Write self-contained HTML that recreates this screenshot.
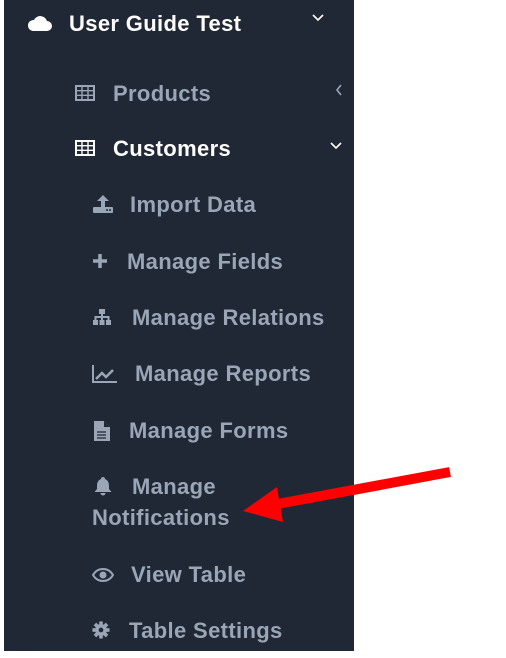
<!DOCTYPE html>
<html><head><meta charset="utf-8"><style>
*{margin:0;padding:0}
body{width:506px;height:658px;background:#fff;position:relative;overflow:hidden;font-family:"Liberation Sans",Arial,sans-serif;font-weight:bold}
#sb{position:absolute;left:4px;top:0;width:350px;height:651px;background:#1f2834}
.t{position:absolute;font-size:22px;letter-spacing:0.35px;color:#9aa5b6;white-space:nowrap;line-height:24px}
.w{color:#fff}
svg.i{position:absolute}
</style></head><body>
<div id="sb"></div>
<svg class="i" style="left:27px;top:14px" width="26" height="18" viewBox="0 0 26 18"><path d="M6 17h14a5 5 0 0 0 0-10 7 7 0 0 0-13-1A5.5 5.5 0 0 0 6 17z" fill="#fff"/></svg>
<div class="t w" style="left:69px;top:12px">User Guide Test</div>
<svg class="i" style="left:311px;top:13px" width="14" height="10"><path d="M2 2l5 5 5-5" stroke="#fff" stroke-width="1.6" fill="none"/></svg>
<svg class="i" style="left:75px;top:85px" width="20" height="16"><rect x="1" y="1" width="18" height="14" fill="none" stroke="#9aa5b6" stroke-width="2"/><path d="M1 5.7h18M1 10.3h18M7 1v14M13 1v14" stroke="#9aa5b6" stroke-width="1.4"/></svg>
<div class="t" style="left:113px;top:82px">Products</div>
<svg class="i" style="left:334px;top:83px" width="10" height="14"><path d="M7 2L3 7l4 5" stroke="#9aa5b6" stroke-width="1.6" fill="none"/></svg>
<svg class="i" style="left:75px;top:140px" width="20" height="16"><rect x="1" y="1" width="18" height="14" fill="none" stroke="#fff" stroke-width="2"/><path d="M1 5.7h18M1 10.3h18M7 1v14M13 1v14" stroke="#fff" stroke-width="1.4"/></svg>
<div class="t w" style="left:113px;top:137px">Customers</div>
<svg class="i" style="left:329px;top:141px" width="14" height="10"><path d="M2 2l5 5 5-5" stroke="#fff" stroke-width="1.6" fill="none"/></svg>
<svg class="i" style="left:92px;top:194px" width="22" height="20"><path d="M11 1l6 6h-4v6h-4V7H5z" fill="#9aa5b6"/><rect x="1" y="13" width="20" height="6" rx="1" fill="#9aa5b6"/><circle cx="15" cy="16" r="1" fill="#1f2834"/><circle cx="18" cy="16" r="1" fill="#1f2834"/></svg>
<div class="t" style="left:130px;top:193px">Import Data</div>
<svg class="i" style="left:92px;top:253px" width="16" height="16"><path d="M8 1v14M1 8h14" stroke="#9aa5b6" stroke-width="3.5"/></svg>
<div class="t" style="left:127px;top:250px">Manage Fields</div>
<svg class="i" style="left:92px;top:308px" width="20" height="18"><rect x="7" y="1" width="6" height="5" fill="#9aa5b6"/><path d="M10 6v3M3.5 12V9h13v3M10 9v3" stroke="#9aa5b6" stroke-width="2" fill="none"/><rect x="1" y="12" width="5" height="5" fill="#9aa5b6"/><rect x="7.5" y="12" width="5" height="5" fill="#9aa5b6"/><rect x="14" y="12" width="5" height="5" fill="#9aa5b6"/></svg>
<div class="t" style="left:132px;top:306px">Manage Relations</div>
<svg class="i" style="left:92px;top:364px" width="26" height="20"><path d="M1 1v17h24" stroke="#9aa5b6" stroke-width="2" fill="none"/><path d="M4 15l6-6 4 4 7-7" stroke="#9aa5b6" stroke-width="2.5" fill="none"/></svg>
<div class="t" style="left:135px;top:362px">Manage Reports</div>
<svg class="i" style="left:93px;top:420px" width="18" height="22"><path d="M1 1h10l6 6v14H1z" fill="#9aa5b6"/><path d="M11 1v6h6" fill="#1f2834"/><path d="M4 12h9M4 15h9M4 18h9" stroke="#1f2834" stroke-width="1.3"/></svg>
<div class="t" style="left:129px;top:419px">Manage Forms</div>
<svg class="i" style="left:93px;top:476px" width="20" height="20"><path d="M10 1a2 2 0 0 1 2 2c3 1 4 4 4 7v3l2.5 3H1.5L4 13v-3c0-3 1-6 4-7a2 2 0 0 1 2-2z" fill="#9aa5b6"/><path d="M7.5 17a2.5 2.5 0 0 0 5 0z" fill="#9aa5b6"/></svg>
<div class="t" style="left:132px;top:475px">Manage</div>
<div class="t" style="left:92px;top:506px">Notifications</div>
<svg class="i" style="left:92px;top:568px" width="22" height="14"><path d="M1 7C4 2 8 1 11 1s7 1 10 6c-3 5-7 6-10 6S4 12 1 7z" fill="none" stroke="#9aa5b6" stroke-width="2"/><circle cx="11" cy="7" r="3.5" fill="#9aa5b6"/></svg>
<div class="t" style="left:131px;top:563px">View Table</div>
<svg class="i" style="left:92px;top:621px" width="18" height="18" viewBox="0 0 20 20"><g fill="#9aa5b6"><circle cx="10" cy="10" r="6.5"/><rect x="8" y="0.5" width="4" height="19"/><rect x="0.5" y="8" width="19" height="4"/><rect x="8" y="0.5" width="4" height="19" transform="rotate(45 10 10)"/><rect x="8" y="0.5" width="4" height="19" transform="rotate(-45 10 10)"/></g><circle cx="10" cy="10" r="2.6" fill="#1f2834"/></svg>
<div class="t" style="left:129px;top:619px">Table Settings</div>
<svg class="i" style="left:0;top:0" width="506" height="658"><path d="M450 472L272 505" stroke="#ff0000" stroke-width="10" fill="none"/><path d="M243 511L277 487L283 522z" fill="#ff0000"/></svg>
</body></html>
